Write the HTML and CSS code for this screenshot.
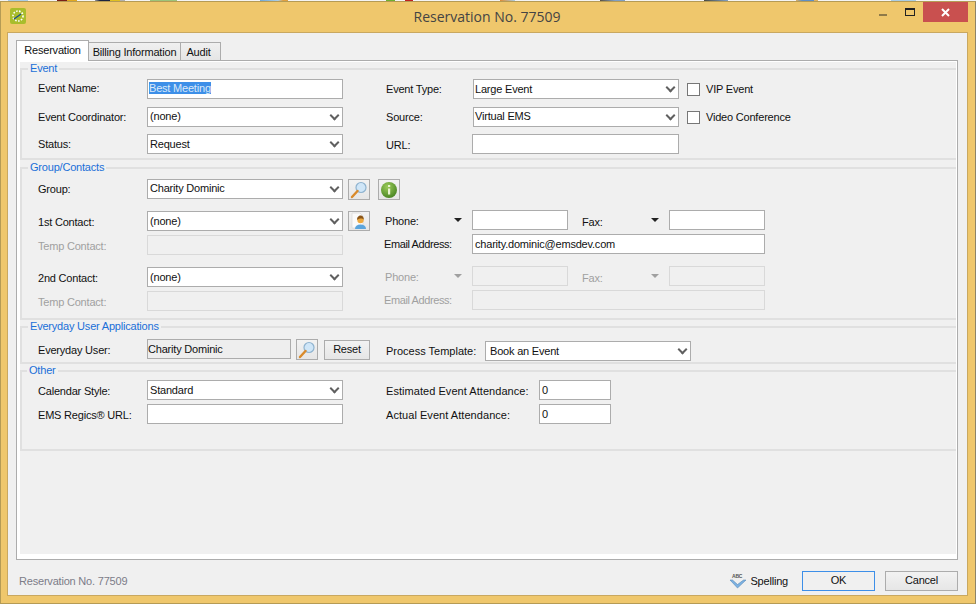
FILE: index.html
```html
<!DOCTYPE html>
<html lang="en">
<head>
<meta charset="utf-8">
<title>Reservation No. 77509</title>
<link rel="stylesheet" href="styles.css">
</head>
<body>
<div class="desktop"></div>
<div class="window">
  <header class="titlebar">
    <svg class="appicon" width="16" height="16" viewBox="0 0 16 16"><rect width="16" height="16" rx="2" fill="#a9bd2c"/><circle cx="8" cy="8" r="5" fill="none" stroke="#fff" stroke-width="1.6" stroke-dasharray="1.6 1.4"/><path d="M4 11 L11 6" stroke="#1b4f8a" stroke-width="1.2"/></svg>
    <span class="title">Reservation No. 77509</span>
    <div class="controls">
      <span class="min"></span>
      <span class="max"></span>
      <span class="close"><svg width="9" height="9" viewBox="0 0 9 9"><path d="M1 1 L8 8 M8 1 L1 8" stroke="#fff" stroke-width="2"/></svg></span>
    </div>
  </header>
  <main class="client">
    <nav class="tabs">
      <span class="tab active">Reservation</span>
      <span class="tab billing">Billing Information</span>
      <span class="tab audit">Audit</span>
    </nav>
    <section class="panel">
      <fieldset class="group event">
        <legend>Event</legend>
        <div class="row r1">
          <label class="lab up">Event Name:</label><div class="in w196 hi"><span class="sel">Best Meeting</span></div>
          <label class="lab2">Event Type:</label><div class="dd w206">Large Event</div>
          <span class="check"></span><span class="chk-label">VIP Event</span>
        </div>
        <div class="row r2">
          <label class="lab">Event Coordinator:</label><div class="dd w196 hi">(none)</div>
          <label class="lab2">Source:</label><div class="dd w206 hi">Virtual EMS</div>
          <span class="check"></span><span class="chk-label">Video Conference</span>
        </div>
        <div class="row r3">
          <label class="lab">Status:</label><div class="dd w196">Request</div>
          <label class="lab2 down">URL:</label><div class="in w207"></div>
        </div>
      </fieldset>

      <fieldset class="group contacts">
        <legend>Group/Contacts</legend>
        <div class="row c1">
          <label class="lab">Group:</label><div class="dd w196 hi">Charity Dominic</div>
          <button class="iconbtn first tall"><svg width="20" height="19" viewBox="0 0 20 19"><use href="#mag"/></svg></button>
          <button class="iconbtn info tall"><svg width="18" height="18" viewBox="0 0 18 18"><defs><radialGradient id="gi" cx=".4" cy=".3" r=".8"><stop offset="0" stop-color="#9ccc5a"/><stop offset="1" stop-color="#3f7d1c"/></radialGradient></defs><circle cx="9" cy="9" r="8" fill="url(#gi)"/><rect x="8" y="4" width="2.2" height="2" fill="#e8f3d0"/><rect x="8" y="7.5" width="2.2" height="6" fill="#e8f3d0"/></svg></button>
        </div>
        <div class="contact-block">
          <div class="cleft">
            <div class="row cl1">
              <label class="lab down">1st Contact:</label><div class="dd w196">(none)</div>
              <button class="iconbtn first"><svg width="18" height="18" viewBox="0 0 18 18"><path d="M2 1h8l3 3v12H2z" fill="#fafafa" stroke="#d4d4d4" stroke-width=".6"/><path d="M5 17c0-3 2-4.500 5.500-4.500s5.500 1.500 5.500 4.500z" fill="#5aa5dd"/><circle cx="10.500" cy="8" r="3.200" fill="#eda93e"/><path d="M7.200 8c-.4-3 1.500-4.500 3.500-4.500s3.300 1.700 3 4.200c-1-1.500-4-1.700-6.500.3z" fill="#8a5518"/></svg></button>
            </div>
            <div class="row cl2">
              <label class="lab off down">Temp Contact:</label><div class="in w196 dis"></div>
            </div>
            <div class="row cl3">
              <label class="lab down">2nd Contact:</label><div class="dd w196">(none)</div>
            </div>
            <div class="row cl4">
              <label class="lab off down">Temp Contact:</label><div class="in w196 dis"></div>
            </div>
          </div>
          <div class="cright">
            <div class="row">
              <label class="pf down">Phone:</label><span class="arr"></span><div class="in w96"></div>
              <label class="fx down2">Fax:</label><span class="arr"></span><div class="in w96"></div>
            </div>
            <div class="row e1">
              <label class="em">Email Address:</label><div class="in w293">charity.dominic@emsdev.com</div>
            </div>
            <div class="row p2">
              <label class="pf off down">Phone:</label><span class="arr off"></span><div class="in w96 dis"></div>
              <label class="fx off down2">Fax:</label><span class="arr off"></span><div class="in w96 dis"></div>
            </div>
            <div class="row e1">
              <label class="em off">Email Address:</label><div class="in w293 dis"></div>
            </div>
          </div>
        </div>
      </fieldset>

      <fieldset class="group everyday">
        <legend>Everyday User Applications</legend>
        <div class="row">
          <label class="lab down">Everyday User:</label><div class="in w144 ro">Charity Dominic</div>
          <button class="iconbtn first tall"><svg width="20" height="19" viewBox="0 0 20 19"><use href="#mag"/></svg></button>
          <button class="btn reset">Reset</button>
          <label class="lab3 down2">Process Template:</label><div class="dd w206 tpl">Book an Event</div>
        </div>
      </fieldset>

      <fieldset class="group other">
        <legend>Other</legend>
        <div class="row o1">
          <label class="lab down">Calendar Style:</label><div class="dd w196">Standard</div>
          <label class="lab4 down">Estimated Event Attendance:</label><div class="in w72">0</div>
        </div>
        <div class="row o2">
          <label class="lab down">EMS Regics® URL:</label><div class="in w196"></div>
          <label class="lab4 down">Actual Event Attendance:</label><div class="in w72">0</div>
        </div>
      </fieldset>
    </section>
    <footer class="footer">
      <span class="status">Reservation No. 77509</span>
      <svg class="spell" width="18" height="18" viewBox="0 0 18 18"><text x="3" y="6" class="abc">ABC</text><path d="M1 8 L8.500 16 L17 8 L14.500 8 L8.500 12.500 L3.500 8z" fill="#7db2e2" stroke="#4a7cae" stroke-width=".5"/></svg>
      <span class="spelltext">Spelling</span>
      <button class="btn ok">OK</button>
      <button class="btn cancel">Cancel</button>
    </footer>
  </main>
</div>
<svg class="defs" width="0" height="0"><defs><g id="mag"><circle cx="12" cy="7.500" r="5" fill="#cfe6f8" stroke="#8fb3cf" stroke-width="1.200"/><path d="M3 17 L8.500 11" stroke="#d98a2b" stroke-width="2.400" stroke-linecap="round"/></g></defs></svg>
</body>
</html>
```

FILE: styles.css
```css
* { box-sizing: border-box; }
html, body { margin: 0; width: 976px; height: 604px; overflow: hidden; }
body { background: #efc76c; font: 11px "Liberation Sans", Arial, sans-serif; letter-spacing: -0.2px; color: #111; }
.desktop { height: 1px; background: linear-gradient(to right,
  #f4f4f4 8px, #a9cde6 8px, #a9cde6 28px, #f4f4f4 28px,
  #f4f4f4 57px, #7a2018 57px, #7a2018 67px, #e0a820 67px, #e0a820 77px, #f4f4f4 77px,
  #f4f4f4 95px, #9a9a9a 95px, #1c2440 100px, #1c2440 110px, #e0c020 110px, #e0c020 120px, #b0b0b0 120px, #b0b0b0 125px, #f4f4f4 125px,
  #f4f4f4 150px, #9cc47a 150px, #9cc47a 177px, #f4f4f4 177px,
  #f4f4f4 260px, #6fa8d8 260px, #a9cde6 278px, #e0a040 283px, #e0a040 288px, #f4f4f4 288px,
  #f4f4f4 386px, #6fb030 386px, #6fb030 395px, #f4f4f4 395px,
  #f4f4f4 405px, #c02020 405px, #c02020 413px, #f4f4f4 413px,
  #f4f4f4 500px, #e08a30 500px, #a9cde6 515px, #f4f4f4 515px,
  #f4f4f4 600px, #5a5040 600px, #7f9fc5 615px, #7f9fc5 625px, #f4f4f4 625px,
  #f4f4f4 704px, #4a4a40 704px, #7f9fc5 728px, #f4f4f4 728px,
  #f4f4f4 796px, #e0b060 796px, #5f8fc5 802px, #5f8fc5 814px, #e0b060 814px, #e0b060 818px, #f4f4f4 818px,
  #f4f4f4 891px, #a9cde6 891px, #a9cde6 916px, #f4f4f4 916px); }
.window { height: 603px; border: 1px solid #b59b55; border-right-color: #8d8467; padding: 0 7px 7px 6px; display: flex; flex-direction: column; }
.titlebar { height: 30px; flex: none; position: relative; display: flex; align-items: center; }
.appicon { margin: -2px 0 0 3px; }
.title { position: absolute; left: 0; right: 0; top: 6px; text-align: center; font: 14px/18px "Open Sans", sans-serif; letter-spacing: 0; color: #444; margin-left: -1px; }
.controls { position: absolute; right: 0; top: 0; display: flex; }
.min { width: 8px; height: 2px; background: #8f7a48; position: absolute; right: 81px; top: 12px; }
.max { width: 10px; height: 8px; border: 1px solid #222; border-top-width: 2px; position: absolute; right: 53px; top: 6px; }
.close { width: 45px; height: 20px; background: #c9504f; display: flex; align-items: center; justify-content: center; }
.client { flex: 1; background: #f0f0f0; border: 1px solid #c9a860; padding: 7px 9px 0 8px; display: flex; flex-direction: column; min-height: 0; }
.tabs { display: flex; height: 21px; align-items: flex-end; position: relative; z-index: 1; margin-bottom: -1px; }
.tab { height: 19px; line-height: 19px; text-align: center; background: linear-gradient(#f0f0f0, #e5e5e5); border: 1px solid #acacac; border-left-width: 0; flex: none; }
.tab.active { height: 21px; width: 73px; background: #fff; border-left-width: 1px; border-bottom: 0; }
.billing { width: 92px; }
.audit { width: 40px; padding-right: 4px; }
.panel { height: 500px; flex: none; border: 1px solid #acacac; background: #f0f0f0; box-shadow: inset 3px 1px 0 #fff, inset -1px -5px 0 #fff; padding: 1px 1px 0 3px; }
.group { margin: 0; padding: 0; border: 0; border-top: 2px solid #e0e0e0; border-left: 2px solid #e0e0e0; border-bottom: 2px solid #e0e0e0; }
.group legend { color: #1a6fd8; padding: 0 2px; margin-left: 6px; font-size: 11px; line-height: 13px; }
.event { height: 98px; }
.contacts { height: 159px; margin-top: 1px; }
.everyday { height: 44px; }
.other { height: 87px; }
.other legend { margin-left: 5px; }
.row { display: flex; align-items: center; height: 20px; }
.lab { width: 109px; margin-left: 16px; flex: none; }
.lab2 { width: 87px; margin-left: 43px; flex: none; }
.lab3 { width: 99px; margin-left: 16px; flex: none; letter-spacing: 0; }
.lab4 { width: 153px; margin-left: 43px; flex: none; letter-spacing: 0.05px; }
.up { padding-bottom: 2px; }
.down { padding-top: 2px; }
.down2 { padding-top: 4px; }
.off { color: #a0a0a0; }
.in, .dd { height: 20px; border: 1px solid #acacac; background: #fff; flex: none; line-height: 18px; padding-left: 2px; white-space: nowrap; }
.hi { line-height: 16px; }
.dd { padding-right: 16px; position: relative; }
.dd::after { content: ""; position: absolute; right: 4px; top: 4px; width: 5px; height: 5px; border: solid #606060; border-width: 0 2px 2px 0; transform: rotate(45deg); }
.dd.w206 { padding-left: 1px; }
.dd.tpl { padding-left: 4px; }
.dis { background: #f0f0f0; border-color: #d9d9d9; }
.ro { background: #eee; padding-left: 0; }
.sel { background: #3d8fe8; color: #dbe9f8; margin-left: -1px; }
.w196 { width: 196px; } .w206 { width: 206px; } .w207 { width: 207px; margin-left: -1px; } .w96 { width: 96px; } .w293 { width: 293px; } .w144 { width: 144px; } .w72 { width: 72px; }
.check { width: 13px; height: 13px; border: 1px solid #777; background: #fff; margin-left: 8px; flex: none; }
.chk-label { margin-left: 6px; }
.event .r1 { margin-top: 4px; }
.event .r2 { margin-top: 8px; }
.event .r3 { margin-top: 7px; }
.iconbtn { width: 22px; height: 20px; padding: 0; background: linear-gradient(#f2f2f2, #e6e6e6); border: 1px solid #acacac; display: flex; align-items: center; justify-content: center; flex: none; }
.iconbtn.first { margin-left: 5px; }
.iconbtn.info { margin-left: 8px; }
.iconbtn.tall { height: 21px; align-self: flex-start; }
.contacts .c1 { margin-top: 5px; }
.contact-block { display: flex; margin-top: 12px; }
.cleft { width: 362px; flex: none; }
.cright { padding-left: 1px; margin-top: -1px; }
.cl2, .cl4 { margin-top: 4px; }
.cl3 { margin-top: 12px; }
.pf { width: 69px; flex: none; }
.arr { width: 0; height: 0; border: 4px solid transparent; border-top: 4px solid #222; border-bottom: 0; margin-right: 10px; flex: none; }
.arr.off { border-top-color: #a0a0a0; }
.fx { margin-left: 14px; width: 69px; flex: none; }
.em { width: 88px; margin-left: -1px; flex: none; letter-spacing: -0.4px; }
.e1 { margin-top: 4px; }
.p2 { margin-top: 12px; }
.btn { font: 11px "Liberation Sans", Arial, sans-serif; letter-spacing: -0.2px; color: #111; background: linear-gradient(#f2f2f2, #e6e6e6); border: 1px solid #acacac; padding: 0 0 2px; height: 20px; flex: none; }
.reset { width: 46px; margin: 1px 0 0 6px; align-self: flex-start; }
.everyday .row { margin-top: 6px; }
.tpl { margin-top: 2px; align-self: flex-start; }
.other .o1 { margin-top: 3px; }
.other .o2 { margin-top: 4px; }
.footer { display: flex; align-items: center; height: 29px; margin-top: 6px; }
.status { color: #7c7c88; margin-left: 3px; margin-right: auto; }
.spell { flex: none; }
.abc { font: bold 5px "Liberation Sans", sans-serif; fill: #555; }
.spelltext { margin: 0 14px 0 3px; }
.ok, .cancel { width: 73px; align-self: flex-start; margin-top: 5px; }
.ok { border-color: #3d8fe8; background: #f0f0f0; margin-right: 10px; }
.defs { position: absolute; }
```
